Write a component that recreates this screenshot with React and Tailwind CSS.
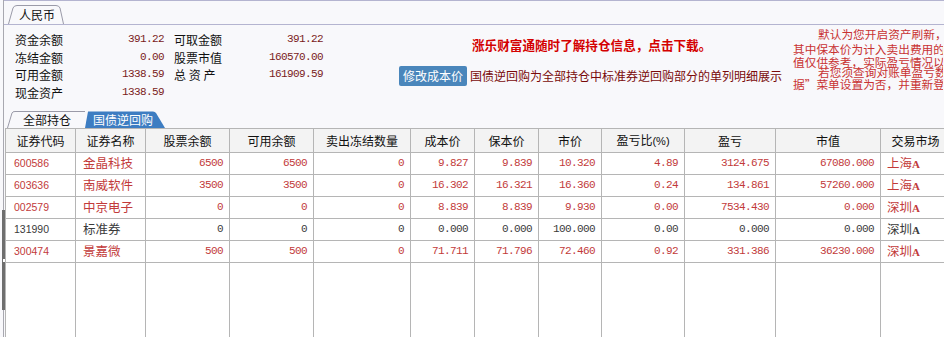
import React from "react";

const CJK = '"Noto Sans CJK SC", "Noto Sans", sans-serif';

const rows = [
  { code: "600586", name: "金晶科技", a: "6500", b: "6500", c: "0", cost: "9.827", keep: "9.839", price: "10.320", ratio: "4.89", pl: "3124.675", mv: "67080.000", mkt: "上海", red: true },
  { code: "603636", name: "南威软件", a: "3500", b: "3500", c: "0", cost: "16.302", keep: "16.321", price: "16.360", ratio: "0.24", pl: "134.861", mv: "57260.000", mkt: "上海", red: true },
  { code: "002579", name: "中京电子", a: "0", b: "0", c: "0", cost: "8.839", keep: "8.839", price: "9.930", ratio: "0.00", pl: "7534.430", mv: "0.000", mkt: "深圳", red: true },
  { code: "131990", name: "标准券", a: "0", b: "0", c: "0", cost: "0.000", keep: "0.000", price: "100.000", ratio: "0.00", pl: "0.000", mv: "0.000", mkt: "深圳", red: false },
  { code: "300474", name: "景嘉微", a: "500", b: "500", c: "0", cost: "71.711", keep: "71.796", price: "72.460", ratio: "0.92", pl: "331.386", mv: "36230.000", mkt: "深圳", red: true },
];

const headers = ["证券代码", "证券名称", "股票余额", "可用余额", "卖出冻结数量", "成本价", "保本价", "市价", "盈亏比(%)", "盈亏", "市值", "交易市场"];
const widths = [70, 70, 84, 84, 97, 64, 64, 63, 83, 91, 105, 70];

const NUM = { fontFamily: '"Liberation Mono", monospace' };

function InfoRow({ l1, v1, l2, v2 }) {
  return (
    <div className="flex h-[17.5px] items-center leading-[17.5px]">
      <span className="w-[60px] text-[12px] text-[#111]">{l1}</span>
      <span className="w-[89px] text-right text-[11px] tracking-[-0.6px] text-[#7a1a1a]" style={NUM}>{v1}</span>
      <span className="ml-[10px] w-[60px] whitespace-pre text-[12px] text-[#111]">{l2}</span>
      <span className="w-[89px] text-right text-[11px] tracking-[-0.6px] text-[#7a1a1a]" style={NUM}>{v2}</span>
    </div>
  );
}

export default function App() {
  return (
    <div className="relative h-[337px] w-[944px] overflow-hidden bg-[#f8f8fb]" style={{ fontFamily: CJK }}>
      {/* left frame line */}
      <div className="flex h-full flex-col border-l border-[#a8a8b0] ml-[3px]">
        {/* top tab row */}
        <div className="flex h-[25px] items-end border-y border-[#b4b4d0] pl-[4px]">
          <div className="relative h-[19px] w-[56px]">
            <svg className="absolute inset-0" width="56" height="19" viewBox="0 0 56 19">
              <path d="M0.5 19 L5 3 Q6 0.5 9 0.5 L48 0.5 Q51 0.5 52 3 L55.5 19" fill="#f8f8fb" stroke="#9a9aa8" />
            </svg>
            <span className="relative block pl-[11px] pt-[1px] text-[12px] leading-[17px] text-[#111]">人民币</span>
          </div>
        </div>

        {/* info area */}
        <div className="flex h-[83px]">
          <div className="ml-[11px] mt-[6px] flex w-[384px] flex-col">
            <InfoRow l1="资金余额" v1="391.22" l2="可取金额" v2="391.22" />
            <InfoRow l1="冻结金额" v1="0.00" l2="股票市值" v2="160570.00" />
            <InfoRow l1="可用金额" v1="1338.59" l2="总 资 产" v2="161909.59" />
            <div className="flex h-[17.5px] items-center leading-[17.5px]">
              <span className="w-[60px] text-[12px] text-[#111]">现金资产</span>
              <span className="w-[89px] text-right text-[11px] tracking-[-0.6px] text-[#7a1a1a]" style={NUM}>1338.59</span>
            </div>
          </div>
          <div className="flex w-[394px] flex-col">
            <div className="mt-[12px] pl-[73px] text-[12.6px] font-bold leading-[16px] text-[#d40000] whitespace-nowrap">
              涨乐财富通随时了解持仓信息，点击下载。
            </div>
            <div className="mt-[13px] flex items-center">
              <div className="flex h-[20px] w-[68px] items-center justify-center rounded-[2px] bg-[#4a86bb] text-[12px] text-white">修改成本价</div>
              <span className="ml-[3px] whitespace-nowrap text-[12px] leading-[16px] text-[#7a0a0a]">国债逆回购为全部持仓中标准券逆回购部分的单列明细展示</span>
            </div>
          </div>
          <div className="w-[150px] overflow-hidden whitespace-nowrap text-[11.7px] leading-[12px] text-[#c83232]">
            <div className="mt-[3px] pl-[25px]">默认为您开启资产刷新，</div>
            <div className="mt-[3px]">其中保本价为计入卖出费用的</div>
            <div className="mt-[1px]">值仅供参考，实际盈亏情况以</div>
            <div className="-mt-[2px] pl-[25px]">若您须查询对账单盈亏数</div>
            <div>据”菜单设置为否，并重新登</div>
          </div>
        </div>

        {/* second tab row */}
        <div className="flex h-[20px] items-end pl-[3px]">
          <div className="relative h-[17px] w-[78px]">
            <svg className="absolute inset-0" width="78" height="17" viewBox="0 0 78 17">
              <path d="M0.5 17 L5 2 Q5.5 0.5 8 0.5 L78 0.5" fill="none" stroke="#9a9aa8" />
            </svg>
            <span className="relative block pl-[16px] text-[12px] leading-[17px] text-[#111]">全部持仓</span>
          </div>
          <div className="relative h-[17px] w-[80px]">
            <svg className="absolute inset-0" width="80" height="17" viewBox="0 0 80 17">
              <path d="M0 17 L3 0.5 L68 0.5 Q70 0.5 71 2 L80 17 Z" fill="#3d7dc2" />
            </svg>
            <span className="relative block pl-[8px] text-[12px] leading-[17px] text-white">国债逆回购</span>
          </div>
        </div>

        {/* table */}
        <div className="flex-1 overflow-hidden pl-[1px]">
          <table className="table-fixed border-collapse" style={{ width: 945 }}>
            <colgroup>
              {widths.map((w, i) => (
                <col key={i} style={{ width: w }} />
              ))}
            </colgroup>
            <thead>
              <tr className="h-[24px]">
                {headers.map((h) => (
                  <th key={h} className="border border-[#b5b5b5] bg-[#f3f3f3] p-0 text-center text-[12px] font-normal whitespace-nowrap text-[#111]">
                    {h === "盈亏比(%)" ? (
                      <>
                        盈亏比<span className="text-[11px]" style={{ fontFamily: '"Liberation Sans", sans-serif' }}>(%)</span>
                      </>
                    ) : (
                      h
                    )}
                  </th>
                ))}
              </tr>
            </thead>
            <tbody>
              {rows.map((r) => {
                const col = r.red ? "text-[#c23a3a]" : "text-[#3a3a3a]";
                const num = `border border-[#b5b5b5] p-0 pr-[6px] text-right text-[11px] tracking-[-0.6px] ${col}`;
                return (
                  <tr key={r.code} className="h-[22px] bg-white">
                    <td className={`border border-[#b5b5b5] p-0 pl-[8px] text-[10.5px] ${col}`} style={{ fontFamily: '"Liberation Sans", sans-serif' }}>{r.code}</td>
                    <td className={`border border-[#b5b5b5] p-0 pl-[7px] text-[12.5px] ${col}`}>{r.name}</td>
                    <td className={num} style={NUM}>{r.a}</td>
                    <td className={num} style={NUM}>{r.b}</td>
                    <td className={num} style={NUM}>{r.c}</td>
                    <td className={num} style={NUM}>{r.cost}</td>
                    <td className={num} style={NUM}>{r.keep}</td>
                    <td className={num} style={NUM}>{r.price}</td>
                    <td className={num} style={NUM}>{r.ratio}</td>
                    <td className={num} style={NUM}>{r.pl}</td>
                    <td className={num} style={NUM}>{r.mv}</td>
                    <td className={`border border-[#b5b5b5] p-0 pl-[6px] text-[12.5px] whitespace-nowrap ${col}`}>
                      {r.mkt}
                      <span className="text-[11px] font-bold" style={{ fontFamily: '"Liberation Serif", serif' }}>A</span>
                    </td>
                  </tr>
                );
              })}
              <tr className="h-[80px] bg-white">
                {widths.map((w, i) => (
                  <td key={i} className="border-x border-[#b5b5b5] p-0" />
                ))}
              </tr>
            </tbody>
          </table>
        </div>
      </div>
      {/* splitter handle on left edge */}
      <div className="absolute left-[2px] top-[210px] h-[100px] w-[3px] bg-[#6e6e6e]" />
      <div className="absolute left-[3px] top-[259px] h-[3px] w-[2px] bg-white" />
    </div>
  );
}
